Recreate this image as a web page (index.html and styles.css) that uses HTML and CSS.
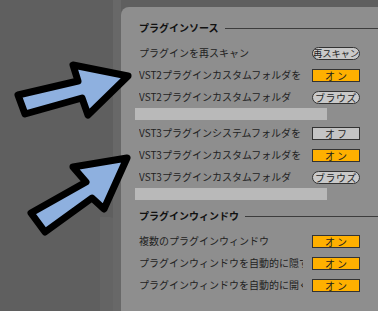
FILE: index.html
```html
<!DOCTYPE html>
<html lang="ja">
<head>
    <meta charset="UTF-8">
    <meta name="viewport" content="width=device-width, initial-scale=1.0">
    <title>プラグイン設定</title>
    <link rel="stylesheet" href="styles.css">
</head>
<body>
    <div class="window">
        <div class="sidebar">
            <div class="sidebar-top"></div>
            <div class="sidebar-box"></div>
        </div>
        <div class="divider"></div>

        <div class="panel">
            <div class="heading">プラグインソース</div>

            <div class="row">
                <span class="label">プラグインを再スキャン</span>
                <span class="pill tight">再スキャン</span>
            </div>
            <div class="row">
                <span class="label">VST2プラグインカスタムフォルダを</span>
                <span class="toggle on">オン</span>
            </div>
            <div class="row">
                <span class="label">VST2プラグインカスタムフォルダ</span>
                <span class="pill">ブラウズ</span>
            </div>
            <div class="path"></div>

            <div class="row first">
                <span class="label">VST3プラグインシステムフォルダを</span>
                <span class="toggle">オフ</span>
            </div>
            <div class="row">
                <span class="label">VST3プラグインカスタムフォルダを</span>
                <span class="toggle on">オン</span>
            </div>
            <div class="row">
                <span class="label">VST3プラグインカスタムフォルダ</span>
                <span class="pill">ブラウズ</span>
            </div>
            <div class="path"></div>

            <div class="heading second">プラグインウィンドウ</div>

            <div class="row">
                <span class="label">複数のプラグインウィンドウ</span>
                <span class="toggle on">オン</span>
            </div>
            <div class="row">
                <span class="label">プラグインウィンドウを自動的に隠す</span>
                <span class="toggle on">オン</span>
            </div>
            <div class="row">
                <span class="label">プラグインウィンドウを自動的に開く</span>
                <span class="toggle on">オン</span>
            </div>
        </div>

        <!-- callout arrows drawn over the page -->
        <svg class="arrows" width="378" height="311" viewBox="0 0 378 311">
            <polygon points="18,95 78,81 73,65 128,76 88,115 82,98 25,114" />
            <polygon points="127,158 73,167 86,182 31,213 45,232 92,198 104,209" />
        </svg>
    </div>
</body>
</html>
```

FILE: styles.css
```css
html, body {
    margin: 0;
    padding: 0;
}

body {
    background-color: #5f5f5f;
    font-family: "Noto Sans CJK JP", "Noto Sans", sans-serif;
    font-size: 10px;
    color: #222;
}

.window {
    position: relative;
    display: flex;
    width: 378px;
    height: 311px;
    overflow: hidden;
}

.sidebar {
    width: 113px;
    display: flex;
    flex-direction: column;
}

.sidebar-top {
    height: 217px;
}

.sidebar-box {
    flex: 1;
    margin-left: 100px;
    margin-right: -3px;
    background-color: #646464;
    border-top-right-radius: 6px;
}

.divider {
    width: 8px;
    background-color: #686868;
}

.panel {
    flex: 1;
    margin-top: 7px;
    padding: 14px 0 0 14px;
    background-color: #8e8e8e;
    border-top-left-radius: 8px;
}

.heading {
    display: flex;
    align-items: center;
    height: 14px;
    line-height: 14px;
    padding-left: 4px;
    margin-bottom: 7px;
    font-weight: bold;
    color: #111;
}

.heading::after {
    content: "";
    flex: 1;
    height: 1px;
    margin-left: 6px;
    background-color: #3c3c3c;
}

.heading.second {
    margin-top: 9px;
}

.row {
    display: flex;
    align-items: center;
    height: 22px;
    padding-left: 4px;
    margin-right: 18px;
}

.row.first {
    margin-top: 2px;
}

.label {
    width: 164px;
    overflow: hidden;
    white-space: nowrap;
    line-height: 14px;
}

.toggle,
.pill {
    margin-left: auto;
    box-sizing: border-box;
    width: 48px;
    height: 13px;
    display: flex;
    align-items: center;
    justify-content: center;
    overflow: hidden;
    white-space: nowrap;
    border: 1px solid #333;
    color: #1e1e1e;
    line-height: 11px;
}

.toggle {
    background-color: #c4c4c4;
    letter-spacing: 2px;
    padding-left: 2px;
}

.toggle.on {
    background-color: #ffb000;
}

.pill {
    border-radius: 7px;
    background-color: #c9c9c9;
    font-size: 10px;
    letter-spacing: 0.5px;
}

.pill.tight {
    font-size: 9.4px;
    letter-spacing: -0.2px;
}

.path {
    width: 192px;
    height: 12px;
    background-color: #b9b9b9;
}

.arrows {
    position: absolute;
    left: 0;
    top: 0;
}

.arrows polygon {
    fill: #8eb0df;
    stroke: #000;
    stroke-width: 7;
    stroke-linejoin: round;
}
```
